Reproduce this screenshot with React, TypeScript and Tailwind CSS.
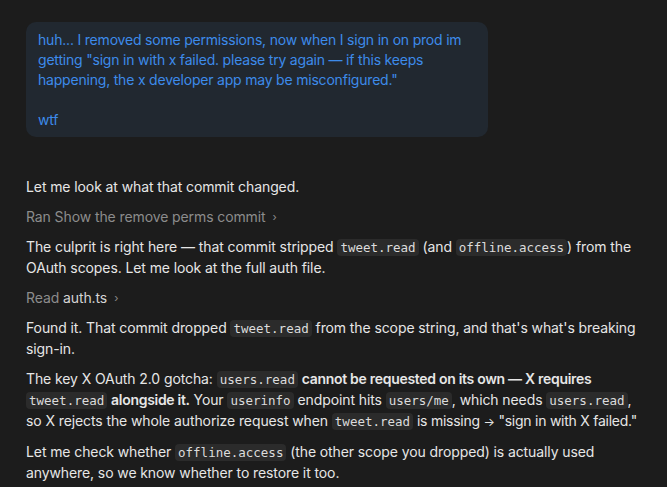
import React from "react";

const Code = ({ children }: { children: React.ReactNode }) => (
  <code className="rounded-[4px] bg-[#2b2b2b] px-[3px] py-[1px] font-['DejaVu_Sans_Mono',monospace] text-[12.5px] tracking-normal text-[#dcdcdc]">
    {children}
  </code>
);

export default function App() {
  return (
    <div className="min-h-[487px] w-full bg-[#1c1c1c] font-['Inter',sans-serif] text-[14px] leading-[20px] text-[#e6e6e6]">
      <div className="px-[26px] pt-[22px]">
        <div className="w-[462px] rounded-[10px] bg-[#212830] px-3 pb-[7px] pt-2 tracking-[-0.2px] text-[#3d8bea]">
          <p className="whitespace-nowrap">
            huh... I removed some permissions, now when I sign in on prod im
            <br />
            getting "sign in with x failed. please try again — if this keeps
            <br />
            happening, the x developer app may be misconfigured."
          </p>
          <p className="h-5" />
          <p>wtf</p>
        </div>
      </div>

      <div className="flex flex-col gap-[10px] px-[26px] pt-[40px] whitespace-nowrap tracking-[-0.1px]">
        <p>Let me look at what that commit changed.</p>
        <p className="flex items-center gap-[7px] text-[#8c8c8c]">
          <span>Ran Show the remove perms commit</span>
          <span className="text-[11px]">›</span>
        </p>
        <p>
          The culprit is right here — that commit stripped <Code>tweet.read</Code> (and{" "}
          <Code>offline.access</Code>) from the
          <br />
          OAuth scopes. Let me look at the full auth file.
        </p>
        <p className="flex items-center gap-[7px] text-[#8c8c8c]">
          <span>
            Read <span className="text-[#d4d4d4]">auth.ts</span>
          </span>
          <span className="text-[11px]">›</span>
        </p>
        <p>
          Found it. That commit dropped <Code>tweet.read</Code> from the scope string, and that's what's breaking
          <br />
          sign-in.
        </p>
        <p>
          The key X OAuth 2.0 gotcha: <Code>users.read</Code>{" "}
          <span className="font-semibold tracking-[-0.3px]">cannot be requested on its own — X requires</span>
          <br />
          <Code>tweet.read</Code> <span className="font-semibold tracking-[-0.3px]">alongside it.</span> Your{" "}
          <Code>userinfo</Code> endpoint hits <Code>users/me</Code>, which needs <Code>users.read</Code>,
          <br />
          so X rejects the whole authorize request when <Code>tweet.read</Code>{" "}
          <span className="tracking-[-0.25px]">
            is missing <span className="text-[12px]">→</span> "sign in with X failed."
          </span>
        </p>
        <p>
          Let me check whether <Code>offline.access</Code> (the other scope you dropped) is actually used
          <br />
          anywhere, so we know whether to restore it too.
        </p>
      </div>
    </div>
  );
}
